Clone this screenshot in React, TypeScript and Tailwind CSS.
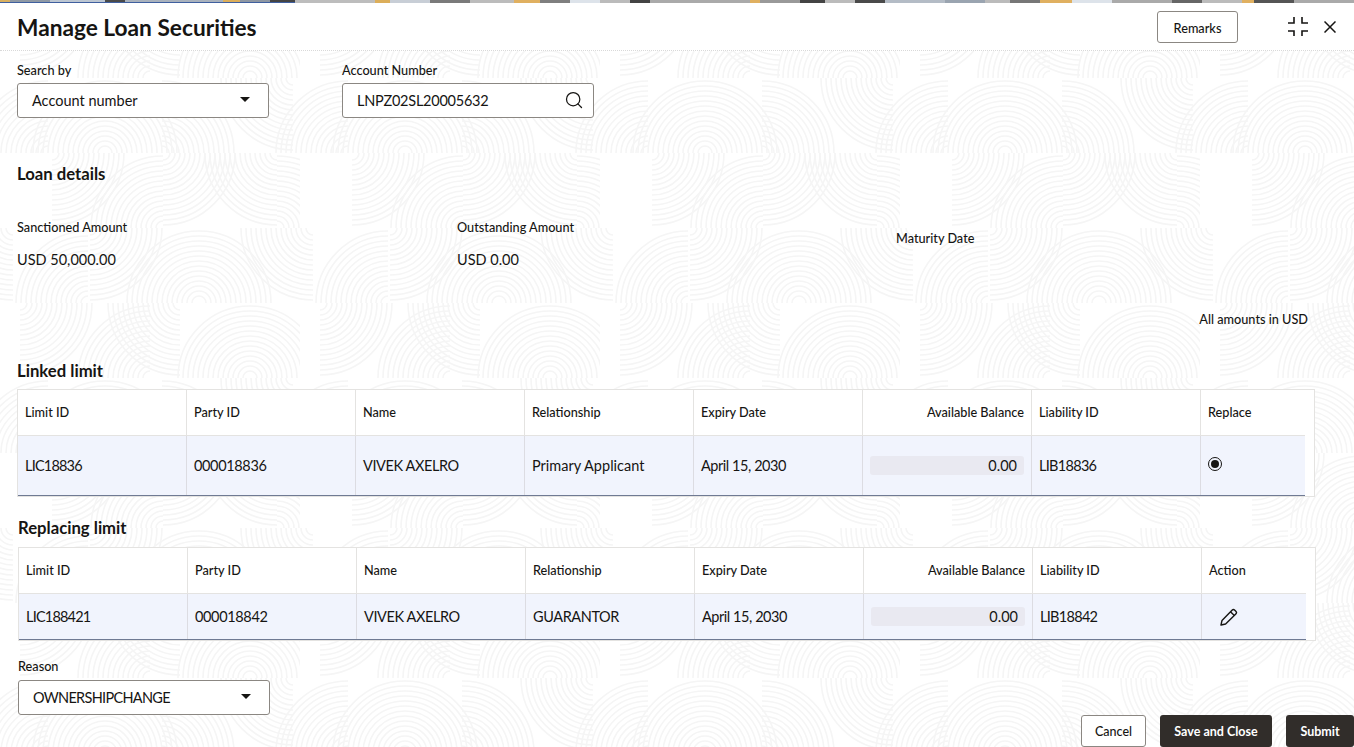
import React from "react";
import { Search } from "lucide-react";

type Quadrant = "tl" | "tr" | "br" | "bl";

// one row of the watermark is 75px high, arcs sit on the row edges
const arcs: [number, number, Quadrant[]][] = [
  [105, 75, ["tl", "tr"]],
  [162, 75, ["tr"]],
  [293, 0, ["bl"]],
  [48, 75, ["tl"]],
  [348, 75, ["tl"]],
  [52, 75, ["br"]],
  [163, 150, ["tl"]],
  [163, 75, ["br"]],
  [277, 75, ["bl"]],
  [277, 150, ["tr"]],
  [90, 150, ["br"]],
  [199, 225, ["tl", "tr"]],
  [13, 150, ["bl"]],
  [313, 150, ["bl"]],
  [88, 225, ["tl"]],
  [250, 300, ["tl", "tr"]],
  [20, 225, ["br"]],
  [150, 300, ["tl"]],
  [180, 225, ["bl"]],
];

const radii = [7, 12, 17, 22, 27, 32, 37, 42, 47, 52, 57, 62, 67, 72];

const arcPath = (x: number, y: number, r: number, q: Quadrant) => {
  if (q === "tl") return `M${x - r} ${y}A${r} ${r} 0 0 1 ${x} ${y - r}`;
  if (q === "tr") return `M${x} ${y - r}A${r} ${r} 0 0 1 ${x + r} ${y}`;
  if (q === "br") return `M${x + r} ${y}A${r} ${r} 0 0 1 ${x} ${y + r}`;
  return `M${x} ${y + r}A${r} ${r} 0 0 1 ${x - r} ${y}`;
};

const Backdrop = () => (
  <svg className="absolute inset-0 h-full w-full" aria-hidden="true">
    <defs>
      <pattern id="print" x="0" y="78" width="300" height="300" patternUnits="userSpaceOnUse">
        <g fill="none" stroke="#f5f5f5" strokeWidth="1.6">
          {arcs.map(([x, y, qs], i) =>
            qs.map((q) => radii.map((r) => <path key={`${i}${q}${r}`} d={arcPath(x, y, r, q)} />))
          )}
        </g>
      </pattern>
    </defs>
    <rect width="100%" height="100%" fill="url(#print)" />
  </svg>
);

const strip: [number, string][] = [
  [10, "#d9b060"], [40, "#8f99a5"], [55, "#bcc6d2"], [20, "#4a4a4a"], [98, "#a9b2bd"], [17, "#dcae5a"], [30, "#8e97a3"],
  [25, "#444444"], [80, "#bdbdbd"], [15, "#dcae5a"], [40, "#c8ced6"], [40, "#7a7a7a"], [44, "#bcbcbc"], [26, "#e0b060"],
  [30, "#7f7f7f"], [30, "#dde3ea"], [30, "#bbbbbb"], [20, "#444444"], [100, "#aaaaaa"], [10, "#e0b060"], [40, "#999999"],
  [25, "#444444"], [30, "#bbbbbb"], [30, "#4a4a4a"], [60, "#b4bcc6"], [40, "#9aa4b0"], [25, "#bbbbbb"], [30, "#777777"],
  [32, "#e0b060"], [40, "#dde3ea"], [60, "#aaaaaa"], [30, "#666666"], [40, "#bbbbbb"], [12, "#e0b060"], [40, "#555555"],
];

const TopStrip = () => (
  <div className="relative flex h-[3px] overflow-hidden bg-[#aaaaaa]">
    {strip.map(([w, c], i) => (
      <div key={i} className="h-full shrink-0" style={{ width: w, backgroundColor: c }} />
    ))}
    <div className="absolute bottom-0 left-0 h-px w-[295px] bg-[#3f5f9f]" />
  </div>
);

const Select = ({ value, className }: { value: string; className: string }) => (
  <div className={`flex h-[35px] w-[252px] items-center justify-between rounded-[3px] border border-[#8b8782] bg-white pl-[14px] pr-[18px] text-[14.5px] ${className}`}>
    <span>{value}</span>
    <span className="mb-[2px] h-0 w-0 border-x-[5px] border-t-[5px] border-x-transparent border-t-[#161513]" />
  </div>
);

const columns = [169, 169, 169, 169, 169, 169, 169, 105];
const tracking = ["tracking-[-0.8px]", "tracking-[-0.35px]", "tracking-[-0.4px]", "", "tracking-[-0.45px]", "", "tracking-[-0.7px]"];
const headers = ["Limit ID", "Party ID", "Name", "Relationship", "Expiry Date", "Available Balance", "Liability ID"];

type TableProps = {
  lastHeader: string;
  row: React.ReactNode[];
  headerHeight: number;
  rowHeight: number;
  action: React.ReactNode;
  className: string;
};

const LimitTable = ({ lastHeader, row, headerHeight, rowHeight, action, className }: TableProps) => (
  <div className={`w-[1298px] border border-[#e4e3e1] bg-white pr-[9px] ${className}`}>
    <div className="flex border-b border-[#e4e3e1] text-[12.7px] font-medium" style={{ height: headerHeight }}>
      {headers.map((h, i) => (
        <div
          key={h}
          className={`flex items-center border-r border-[#e4e3e1] px-[7px] ${i === 5 ? "justify-end" : ""}`}
          style={{ width: columns[i] }}
        >
          {h}
        </div>
      ))}
      <div className="flex items-center px-[7px]">{lastHeader}</div>
    </div>
    <div className="flex border-b border-[#6f7a93] bg-[#f1f4fd] text-[14.5px]" style={{ height: rowHeight }}>
      {row.map((v, i) => (
        <div key={i} className={`flex items-center border-r border-[#dcdce2] px-[7px] ${tracking[i]}`} style={{ width: columns[i] }}>
          {i === 5 ? (
            <div className="flex h-[19px] w-full items-center justify-end rounded-[3px] bg-[#e9e9f1] pr-[7px]">{v}</div>
          ) : (
            v
          )}
        </div>
      ))}
      <div className="flex items-center px-[7px]">{action}</div>
    </div>
  </div>
);

export default function App() {
  return (
    <div className="relative h-[747px] w-[1354px] overflow-hidden bg-white font-['Lato','Noto_Sans',sans-serif] text-[#161513]">
      <Backdrop />
      <div className="relative">
        <TopStrip />

        <header className="flex h-[48px] items-center justify-between border-b border-dotted border-[#d9d9d9] bg-white pl-[17px] pr-[18px]">
          <h1 className="mt-[4px] text-[22.7px] font-bold">Manage Loan Securities</h1>
          <div className="flex items-center">
            <button className="h-[32px] w-[81px] rounded-[3px] border border-[#8b8782] pt-[4px] text-[12.7px] font-medium">Remarks</button>
            <svg className="ml-[50px] h-[20px] w-[20px]" viewBox="0 0 20 20" fill="none" stroke="#161513" strokeWidth="1.6">
              <path d="M6 0v6H0M14 0v6h6M0 14h6v5M20 14h-6v5" />
            </svg>
            <svg className="ml-[16px] h-[12px] w-[12px]" viewBox="0 0 12 12" fill="none" stroke="#161513" strokeWidth="1.5">
              <path d="M0.5 0.5l11 11M11.5 0.5l-11 11" />
            </svg>
          </div>
        </header>

        <div className="flex pl-[17px] pt-[10px]">
          <div className="w-[325px]">
            <div className="mb-[3px] text-[12.7px] font-medium">Search by</div>
            <Select value="Account number" className="" />
          </div>
          <div>
            <div className="mb-[3px] text-[12.7px] font-medium">Account Number</div>
            <div className="flex h-[35px] w-[252px] items-center justify-between rounded-[3px] border border-[#8b8782] bg-white pl-[14px] pr-[9px] text-[14.5px]">
              <span className="tracking-[-0.25px]">LNPZ02SL20005632</span>
              <Search size={20} strokeWidth={1.5} className="mb-[2px]" />
            </div>
          </div>
        </div>

        <h2 className="ml-[17px] mt-[44px] text-[16.7px] font-bold">Loan details</h2>

        <div className="ml-[17px] mt-[31px] flex items-start text-[12.7px] font-medium">
          <div className="w-[440px]">
            <div>Sanctioned Amount</div>
            <div className="mt-[12px] text-[14.5px] font-normal">USD 50,000.00</div>
          </div>
          <div className="w-[439px]">
            <div>Outstanding Amount</div>
            <div className="mt-[12px] text-[14.5px] font-normal">USD 0.00</div>
          </div>
          <div className="mt-[11px]">Maturity Date</div>
        </div>

        <div className="mr-[46px] mt-[39px] text-right text-[12.7px] font-medium">All amounts in USD</div>

        <h2 className="ml-[17px] mt-[30px] text-[16.7px] font-bold">Linked limit</h2>
        <LimitTable
          className="ml-[17px] mt-[5px]"
          lastHeader="Replace"
          headerHeight={46}
          rowHeight={60}
          row={["LIC18836", "000018836", "VIVEK AXELRO", "Primary Applicant", "April 15, 2030", "0.00", "LIB18836"]}
          action={
            <span className="mb-[3px] flex h-[14px] w-[14px] items-center justify-center rounded-full border border-[#161513]">
              <span className="h-[8px] w-[8px] rounded-full bg-[#161513]" />
            </span>
          }
        />

        <h2 className="ml-[18px] mt-[19px] text-[16.7px] font-bold">Replacing limit</h2>
        <LimitTable
          className="ml-[18px] mt-[6px]"
          lastHeader="Action"
          headerHeight={46}
          rowHeight={46}
          row={[
            "LIC188421",
            "000018842",
            "VIVEK AXELRO",
            <span className="tracking-[-0.4px]">GUARANTOR</span>,
            "April 15, 2030",
            "0.00",
            "LIB18842",
          ]}
          action={
            <svg className="ml-[11px] h-[18px] w-[18px]" viewBox="0 0 18 18" fill="none" stroke="#161513" strokeWidth="1.4" strokeLinejoin="round">
              <path d="M1 17l1-4.6L12 2.2q1.4-1.4 2.8 0l1 1q1.4 1.4 0 2.8L5.6 16z" />
              <path d="M10.5 3.8l3.8 3.8" />
            </svg>
          }
        />

        <div className="ml-[18px] mt-[16px] text-[12.7px] font-medium">Reason</div>
        <Select value="OWNERSHIPCHANGE" className="ml-[18px] mt-[4px] tracking-[-0.7px]" />
      </div>

      <div className="absolute bottom-0 right-0 flex items-center gap-[14px] text-[12.5px] font-bold">
        <button className="h-[32px] w-[65px] rounded-[3px] border border-[#8b8782] bg-white pt-[2px] font-medium">Cancel</button>
        <button className="h-[32px] w-[112px] rounded-[3px] bg-[#312d2a] pt-[2px] text-white">Save and Close</button>
        <button className="h-[32px] w-[68px] rounded-[3px] bg-[#312d2a] pt-[2px] text-white">Submit</button>
      </div>
    </div>
  );
}
